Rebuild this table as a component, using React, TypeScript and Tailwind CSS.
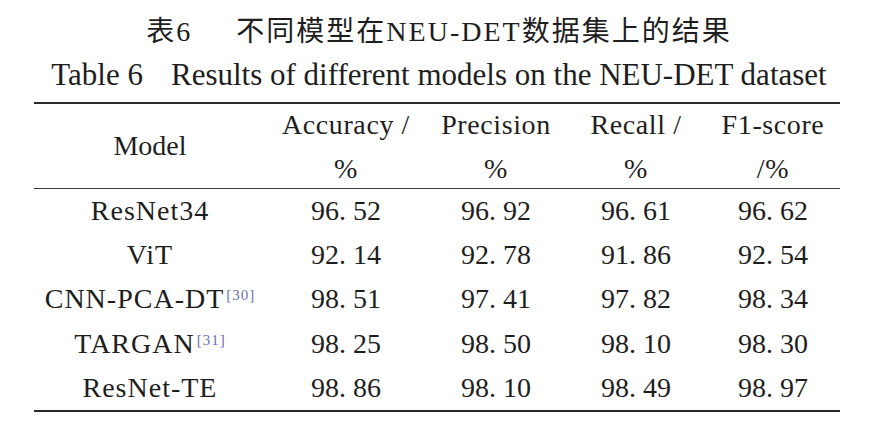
const serif = "font-['Liberation_Serif','Noto_Sans_CJK_SC',serif]";

type Row = { model: string; cite?: string; values: string[] };

const rows: Row[] = [
  { model: 'ResNet34', values: ['96.52', '96.92', '96.61', '96.62'] },
  { model: 'ViT', values: ['92.14', '92.78', '91.86', '92.54'] },
  { model: 'CNN-PCA-DT', cite: '[30]', values: ['98.51', '97.41', '97.82', '98.34'] },
  { model: 'TARGAN', cite: '[31]', values: ['98.25', '98.50', '98.10', '98.30'] },
  { model: 'ResNet-TE', values: ['98.86', '98.10', '98.49', '98.97'] },
];

const headers = [
  ['Accuracy /', '%'],
  ['Precision', '%'],
  ['Recall /', '%'],
  ['F1-score', '/%'],
];

// decimal point in the source is set with a wide gap after it
const Num = ({ v }: { v: string }) => {
  const [a, b] = v.split('.');
  return (
    <span>
      {a}
      <span className="mr-[7px]">.</span>
      {b}
    </span>
  );
};

const cols = 'grid grid-cols-[232px_160px_140px_140px_134px]';

export default function App() {
  return (
    <div className={`w-[878px] h-[428px] bg-white text-[#1e1e1e] ${serif}`}>
      {/* Captions */}
      <div className="flex flex-col items-center pt-[13px]">
        <div className="text-[28px] leading-[38px] tracking-[2px]">
          表6<span className="inline-block w-[44px]" />不同模型在NEU-DET数据集上的结果
        </div>
        <div className="text-[31px] leading-[40px] mt-[4px]">
          Table 6<span className="inline-block w-[28px]" />Results of different models on the NEU-DET dataset
        </div>
      </div>

      {/* Table */}
      <div className="ml-[34px] w-[806px] mt-[7px] border-t-2 border-b-2 border-[#2a2a2a] text-[28px]">
        <div className={`${cols} h-[85px] border-b border-[#3a3a3a]`}>
          <div className="flex items-center justify-center pb-[2px]">Model</div>
          {headers.map(([l1, l2]) => (
            <div key={l1} className="flex flex-col items-center tracking-[0.6px]">
              <div className="h-[44px] flex items-center pb-[2px]">{l1}</div>
              <div className="h-[41px] flex items-center">{l2}</div>
            </div>
          ))}
        </div>
        {rows.map((r) => (
          <div key={r.model} className={`${cols} h-[44.2px] items-center`}>
            <div className="text-center tracking-[1px]">
              {r.model}
              {r.cite && (
                <sup className="text-[15px] text-[#6b72b4] ml-[2px] relative top-[-8px]">{r.cite}</sup>
              )}
            </div>
            {r.values.map((v, i) => (
              <div key={i} className="text-center">
                <Num v={v} />
              </div>
            ))}
          </div>
        ))}
      </div>
    </div>
  );
}
